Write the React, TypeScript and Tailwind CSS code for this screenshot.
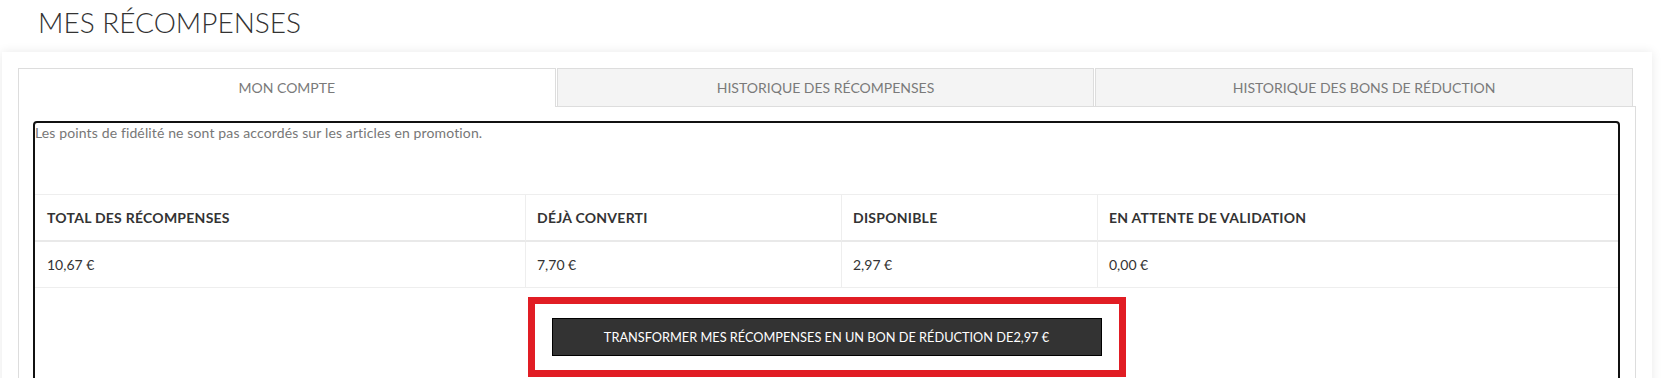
import React from "react";

const tabs = [
  { label: "MON COMPTE", active: true },
  { label: "HISTORIQUE DES RÉCOMPENSES", active: false },
  { label: "HISTORIQUE DES BONS DE RÉDUCTION", active: false },
];

const cols = [
  { head: "TOTAL DES RÉCOMPENSES", value: "10,67 €" },
  { head: "DÉJÀ CONVERTI", value: "7,70 €" },
  { head: "DISPONIBLE", value: "2,97 €" },
  { head: "EN ATTENTE DE VALIDATION", value: "0,00 €" },
];

export default function App() {
  return (
    <div className="w-[1661px] min-h-[378px] bg-white font-['Lato',sans-serif] text-[#333]">
      <div className="h-[52px] pl-[38px] pt-[8px]">
        <h1 className="text-[28px] leading-[29px] font-light text-[#333]">MES RÉCOMPENSES</h1>
      </div>

      <div className="ml-[2px] w-[1650px] bg-white shadow-[0_0_10px_rgba(0,0,0,0.09)] pt-[16px] pl-[16px] pb-[20px]">
        <div className="flex items-start gap-[1px] w-[1615px] h-[38px]">
          {tabs.map((t) =>
            t.active ? (
              <div
                key={t.label}
                className="relative z-10 flex-1 h-[39px] border border-b-0 border-[#ddd] bg-white flex items-center justify-center text-[14px] text-[#7a7a7a] pb-[1px]"
              >
                {t.label}
              </div>
            ) : (
              <div
                key={t.label}
                className="flex-1 h-[38px] border border-b-0 border-[#ddd] bg-[#f4f4f4] flex items-center justify-center text-[14px] text-[#7a7a7a]"
              >
                {t.label}
              </div>
            )
          )}
        </div>

        <div className="w-[1618px] border border-[#ddd] pt-[14px] pl-[14px] pr-[15px] pb-[14px]">
          <div className="border-2 border-[#111] rounded-[4px] pb-[24px]">
            <p className="h-[71px] text-[14px] leading-[20px] tracking-[0.13px] text-[#777]">
              Les points de fidélité ne sont pas accordés sur les articles en promotion.
            </p>
            <div className="grid grid-cols-[490px_316px_256px_1fr] border-t border-[#eee]">
              {cols.map((c, i) => (
                <div
                  key={c.head}
                  className={
                    i === 0
                      ? "h-[47px] pl-[12px] flex items-center border-b-2 border-[#e9e9e9] text-[14px] font-bold tracking-[0.25px] text-[#333]"
                      : "h-[47px] pl-[11px] flex items-center border-l border-l-[#eee] border-b-2 border-[#e9e9e9] text-[14px] font-bold tracking-[0.25px] text-[#333]"
                  }
                >
                  {c.head}
                </div>
              ))}
              {cols.map((c, i) => (
                <div
                  key={c.value + i}
                  className={
                    i === 0
                      ? "h-[46px] pl-[12px] flex items-center border-b border-[#eee] text-[14px] text-[#333]"
                      : "h-[46px] pl-[11px] flex items-center border-l border-b border-[#eee] text-[14px] text-[#333]"
                  }
                >
                  {c.value}
                </div>
              ))}
            </div>
            <div className="flex justify-center mt-[9px]">
              <div className="w-[598px] h-[80px] border-[7px] border-[#e11d24] flex items-center justify-center">
                <button className="w-[550px] h-[38px] bg-[#333] border border-black text-white text-[12.75px] leading-none flex items-center justify-center">
                  TRANSFORMER MES RÉCOMPENSES EN UN BON DE RÉDUCTION DE2,97 €
                </button>
              </div>
            </div>
          </div>
        </div>
      </div>
    </div>
  );
}
